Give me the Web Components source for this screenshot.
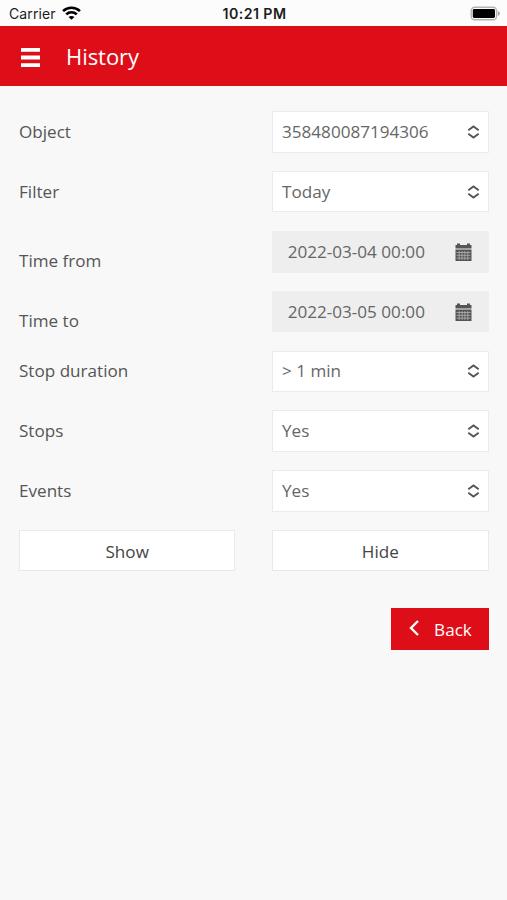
<!DOCTYPE html>
<html lang="en"><head><meta charset="utf-8"><title>History</title>
<style>html,body{margin:0;height:100%}body{background:#f8f8f8;font-family:"Open Sans",sans-serif;font-size:17.1px;color:#555;overflow:hidden}</style>
</head><body>
<history-page></history-page>
<script>
const define = (name, html) => customElements.define(name, class extends HTMLElement {
  constructor() {
    super();
    const t = document.createElement('template');
    t.innerHTML = html;
    this.attachShadow({mode: 'open'}).append(t.content.cloneNode(true));
  }
});
// Phone status bar: carrier, clock, battery
define('status-bar', `<style>
:host{display:grid;grid-template-columns:1fr auto 1fr;align-items:center;height:25.5px;box-sizing:border-box;padding:2px 7px 0 9px;background:#fcfcfc;color:#1c1c1c;font:14px/20px Inter,sans-serif}
.l{display:flex;align-items:center;gap:6px;letter-spacing:.12px}.t{font-weight:600;font-size:14.2px;letter-spacing:.42px}
.b{justify-self:end}svg{display:block}.l svg{margin-top:-2px}.b svg{margin-top:-1px}
</style><div class="l"><span>Carrier</span><svg width="19" height="14" viewBox="0 0 18 14" fill="none" stroke="#000" stroke-width="2.5" preserveAspectRatio="none"><path d="M1 5.1C5.5.7 12.5.7 17 5.1"/><path d="M4 8.3c2.8-2.8 7.2-2.8 10 0"/><path d="M9 13.8 6.2 11c1.6-1.5 4-1.5 5.6 0z" fill="#000" stroke="none"/></svg></div>
<span class="t">10:21 PM</span>
<div class="b"><svg width="30" height="15" viewBox="0 0 30 15"><rect x="1.2" y="1.2" width="25.4" height="12.6" rx="3.6" fill="#fcfcfc" stroke="#b3b3b3" stroke-width="1.4"/><rect x="2.8" y="3" width="22.2" height="9" rx="1.4"/><path d="M27.8 5q2.2.8 2.2 2.5t-2.2 2.5z" fill="#aaa"/></svg></div>`);
define('page-header', `<style>
:host{display:flex;align-items:center;gap:26px;height:60.5px;box-sizing:border-box;padding:0 21px;background:#dd0e17;color:#fff;font-size:22px;line-height:30px}
svg{display:block;margin-top:4px}span{margin-top:1px;letter-spacing:-.05px}
</style><svg width="19" height="19" viewBox="0 0 19 19" fill="#fff"><path d="M0 0h19v3.8H0zM0 7.6h19v3.8H0zM0 15.2h19V19H0z"/></svg><span><slot></slot></span>`);
define('field-row', `<style>
:host{display:grid;grid-template-columns:216.4px 216.6px;justify-content:space-between;align-items:center;height:41.4px}
.l{line-height:24px;padding-top:var(--label-drop,0px)}
</style><div class="l"><slot name="label"></slot></div><slot></slot>`);
define('select-box', `<style>
:host{display:flex;align-items:center;justify-content:space-between;height:41.4px;box-sizing:border-box;border:1px solid #ebebeb;background:#fff;padding:0 8px 0 9px;color:#666;line-height:24px}
</style><span><slot></slot></span><svg width="13" height="14" viewBox="0 0 13 14" fill="none" stroke="#555" stroke-width="1.9"><path d="m1.3 5.3 5.2-3.8 5.2 3.8M1.3 8.7l5.2 3.8 5.2-3.8"/></svg>`);
define('date-box', `<style>
:host{display:flex;height:41.4px;align-items:center;background:#eee;color:#666;line-height:24px}
.d{flex:1;text-align:center;padding-left:3px}.i{width:51px;display:flex;justify-content:center}
</style><div class="d"><slot></slot></div><div class="i"><svg width="17" height="18" viewBox="0 0 17 18" fill="#555"><path d="M.5 2H2V.5h3V2h7V.5h3V2h1.5v3.5H.5zM.5 6.5h16V18H.5z"/><path d="M1.5 9.5h14M1.5 12.3h14M1.5 15.1h14M4.2 8v9M7.1 8v9M9.9 8v9M12.8 8v9" stroke="#b8b8b8" stroke-width=".75"/></svg></div>`);
define('plain-button', `<style>
:host{display:flex;align-items:center;justify-content:center;height:41.4px;box-sizing:border-box;border:1px solid #e9e9e9;background:#fff;color:#444;line-height:24px;padding-top:2px}
</style><slot></slot>`);
define('back-button', `<style>
:host{display:flex;align-items:center;gap:15px;width:98px;height:42px;box-sizing:border-box;padding:0 0 0 18.5px;background:#dd0e17;color:#fff;line-height:24px}
svg{margin-top:-1px}span{padding-top:2px}
</style><svg width="10" height="16" viewBox="0 0 10 16" fill="none" stroke="#fff" stroke-width="2.4"><path d="M9 1 2 8l7 7"/></svg><span><slot></slot></span>`);
define('history-page', `<style>
:host{display:block}
main{display:flex;flex-direction:column;gap:18.45px;padding:25.2px 18.4px 0 19px}
.date{--label-drop:18px}
back-button{align-self:flex-end;margin-top:18px}
</style><status-bar></status-bar><page-header>History</page-header><main>
<field-row><span slot="label">Object</span><select-box>358480087194306</select-box></field-row>
<field-row><span slot="label">Filter</span><select-box>Today</select-box></field-row>
<field-row class="date"><span slot="label">Time from</span><date-box>2022-03-04 00:00</date-box></field-row>
<field-row class="date"><span slot="label">Time to</span><date-box>2022-03-05 00:00</date-box></field-row>
<field-row><span slot="label">Stop duration</span><select-box>&gt; 1 min</select-box></field-row>
<field-row><span slot="label">Stops</span><select-box>Yes</select-box></field-row>
<field-row><span slot="label">Events</span><select-box>Yes</select-box></field-row>
<field-row><plain-button slot="label">Show</plain-button><plain-button>Hide</plain-button></field-row>
<back-button>Back</back-button></main>`);
</script></body></html>
